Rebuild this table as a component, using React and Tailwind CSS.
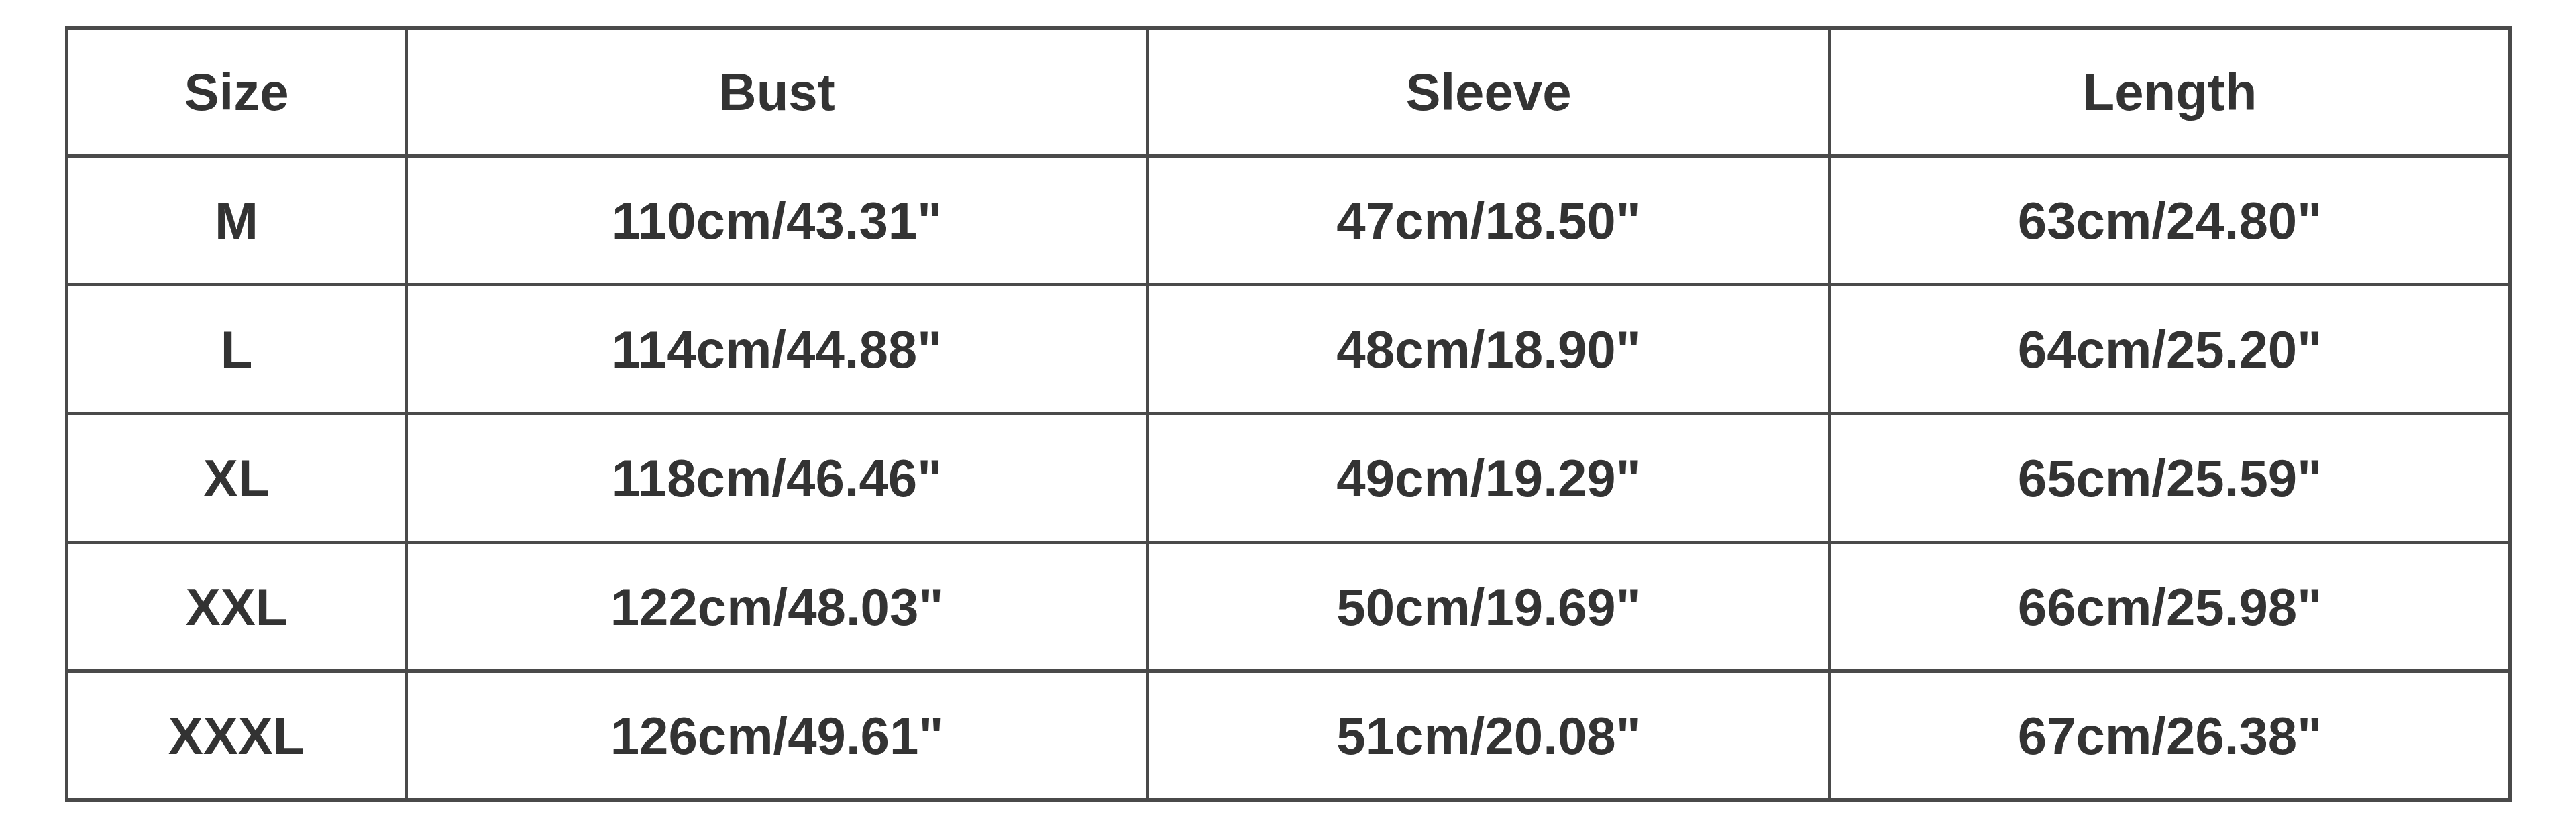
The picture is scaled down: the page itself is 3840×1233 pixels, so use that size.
const headers = ["Size", "Bust", "Sleeve", "Length"];

const rows = [
  ["M", "110cm/43.31\"", "47cm/18.50\"", "63cm/24.80\""],
  ["L", "114cm/44.88\"", "48cm/18.90\"", "64cm/25.20\""],
  ["XL", "118cm/46.46\"", "49cm/19.29\"", "65cm/25.59\""],
  ["XXL", "122cm/48.03\"", "50cm/19.69\"", "66cm/25.98\""],
  ["XXXL", "126cm/49.61\"", "51cm/20.08\"", "67cm/26.38\""],
];

const cell = "border-[5px] border-[#4a4a4a] p-0 text-center align-middle";

const App = () => {
  return (
    <div
      className="min-h-[1233px] w-full bg-white pl-[97px] pt-[39px] text-[#333333]"
      style={{ fontFamily: '"Liberation Sans", Arial, sans-serif' }}
    >
      <table className="table-fixed border-collapse text-[78px] font-bold leading-none">
        <colgroup>
          <col className="w-[506px]" />
          <col className="w-[1105px]" />
          <col className="w-[1017px]" />
          <col className="w-[1014px]" />
        </colgroup>
        <thead>
          <tr className="h-[191px]">
            {headers.map((h) => (
              <th key={h} className={cell + " font-bold"}>
                {h}
              </th>
            ))}
          </tr>
        </thead>
        <tbody>
          {rows.map((row) => (
            <tr key={row[0]} className="h-[192px]">
              {row.map((value, i) => (
                <td key={i} className={cell}>
                  {value}
                </td>
              ))}
            </tr>
          ))}
        </tbody>
      </table>
    </div>
  );
};

export default App;
